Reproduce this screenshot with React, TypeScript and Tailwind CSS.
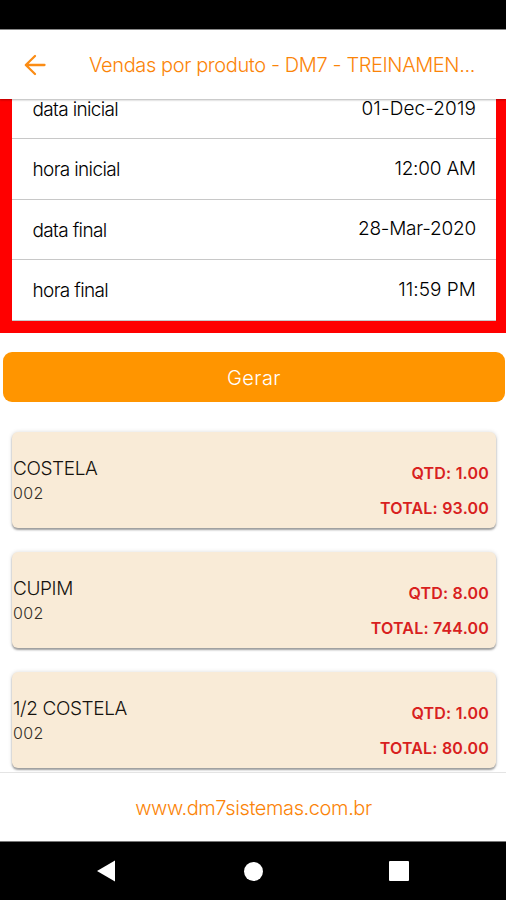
const fields = [
  { label: 'data inicial', value: '01-Dec-2019', spacing: 'tracking-[0.1px]', nudge: 'pt-[2px]' },
  { label: 'hora inicial', value: '12:00 AM', spacing: 'tracking-[-0.2px]', nudge: 'pt-px' },
  { label: 'data final', value: '28-Mar-2020', spacing: 'tracking-[-0.2px]', nudge: 'pt-px' },
  { label: 'hora final', value: '11:59 PM', spacing: 'tracking-[0.05px]', nudge: 'pt-0' },
];

const products = [
  { name: 'COSTELA', code: '002', qty: '1.00', total: '93.00' },
  { name: 'CUPIM', code: '002', qty: '8.00', total: '744.00' },
  { name: '1/2 COSTELA', code: '002', qty: '1.00', total: '80.00' },
];

function Header() {
  return (
    <header className="relative z-10 flex h-[70px] shrink-0 items-center border-t border-[#888] bg-white shadow-[0_1px_2px_rgba(0,0,0,0.3)]">
      <svg className="ml-6 h-[22px] w-[22px] shrink-0" viewBox="0 0 22 22" fill="none" stroke="#fb8c14" strokeWidth="2.3" strokeLinecap="round" strokeLinejoin="round">
        <path d="M11 2 1.8 11 11 20M2 11H20.5" />
      </svg>
      <h1 className="ml-[43px] whitespace-nowrap text-[20px] font-light leading-6 tracking-[-0.39px] text-[#fb8408]">
        Vendas por produto - DM7 - TREINAMEN...
      </h1>
    </header>
  );
}

function Filters() {
  return (
    <section className="-mt-[20.5px] shrink-0 border-12 border-t-0 border-[#ff0000] border-r-[10px] bg-white">
      {fields.map((f) => (
        <div key={f.label} className={`flex h-[60.6px] items-center justify-between border-b border-[#c8c8c8] pl-[20.5px] pr-5 font-light leading-[18px] text-black ${f.nudge}`}>
          <span className="mt-[2px] text-[19px] tracking-[-0.65px]">{f.label}</span>
          <span className={`-mt-px text-[19px] ${f.spacing}`}>{f.value}</span>
        </div>
      ))}
    </section>
  );
}

function ProductCard({ name, code, qty, total }: (typeof products)[number]) {
  return (
    <article className="flex h-24 shrink-0 justify-between rounded-[6px] bg-[#f9ebd7] pl-[1px] pr-[7px] shadow-[0_2px_2px_rgba(0,0,0,0.35),0_0_4px_rgba(0,0,0,0.15)]">
      <div className="pt-[25px] font-light">
        <div className="text-[19px] leading-6 tracking-[-0.4px] text-[#15120e]">{name}</div>
        <div className="text-[16px] leading-6 tracking-[0.4px] text-[#332d26]">{code}</div>
      </div>
      <div className="pt-[29px] text-right text-[16px] font-semibold leading-[24px] tracking-[0.2px] text-[#d8201e]">
        <div>QTD: {qty}</div>
        <div className="mt-[11px]">TOTAL: {total}</div>
      </div>
    </article>
  );
}

export default function App() {
  return (
    <div className="flex h-[900px] w-[506px] flex-col overflow-hidden bg-white font-['Inter',sans-serif]">
      <div className="h-[29px] shrink-0 bg-black" />
      <Header />
      <main className="flex min-h-0 flex-1 flex-col overflow-hidden">
        <Filters />
        <button className="ml-[3px] mr-[1px] mt-[19.5px] h-[50px] shrink-0 rounded-[9px] bg-[#ff9500] pt-px text-[20px] font-light tracking-[0.4px] text-white">
          Gerar
        </button>
        <div className="flex flex-col gap-6 pb-6 pl-3 pr-[10px] pt-[29.5px]">
          {products.map((p) => (
            <ProductCard key={p.name} {...p} />
          ))}
        </div>
      </main>
      <footer className="z-10 flex h-[70px] shrink-0 items-center justify-center border-b border-t border-b-[#777] border-t-[#e4e4e4] bg-white pl-px pt-[2px] text-[20px] font-light tracking-[-0.4px] text-[#fb8408]">
        www.dm7sistemas.com.br
      </footer>
      <nav className="flex h-[58px] shrink-0 items-center bg-black pl-[96px]">
        <svg className="h-[22px] w-[19px]" viewBox="0 0 19 22" fill="#fff">
          <path d="M1 11 19 0.5V21.5Z" />
        </svg>
        <span className="ml-[129px] h-[19px] w-[19px] rounded-full bg-white" />
        <span className="ml-[126px] h-[20px] w-[20px] rounded-[1px] bg-white" />
      </nav>
    </div>
  );
}
